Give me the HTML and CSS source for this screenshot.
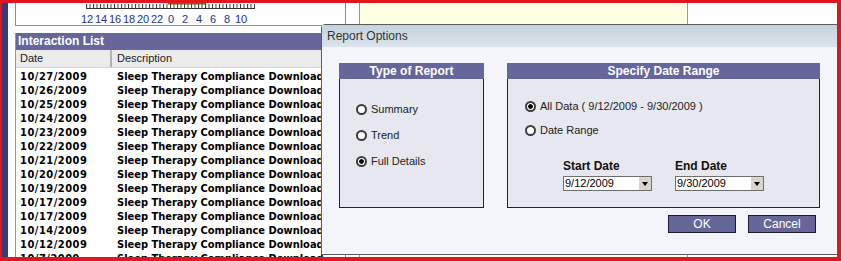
FILE: index.html
```html
<!DOCTYPE html>
<html lang="en">
<head>
    <meta charset="UTF-8">
    <title>Interaction List - Report Options</title>
    <link rel="stylesheet" href="styles.css">
</head>
<body>
    <div class="app">
        <div class="stripe"></div>

        <div class="left-col">
            <div class="chart">
                <svg width="329" height="22" viewBox="0 0 329 22">
                    <defs>
                        <pattern id="tick" x="70" y="0" width="3.5" height="5" patternUnits="userSpaceOnUse">
                            <rect width="1" height="5" fill="#333"/>
                        </pattern>
                    </defs>
                    <rect x="152" y="0" width="38" height="1" fill="#6f6a2a"/>
                    <rect x="152" y="1" width="38" height="1" fill="#9cc46a"/>
                    <rect x="70" y="1" width="169" height="4" fill="url(#tick)"/>
                    <path d="M70 5.5H239" stroke="#333"/>
                    <g class="hours">
                        <text x="71" y="20">12</text>
                        <text x="85" y="20">14</text>
                        <text x="99" y="20">16</text>
                        <text x="113" y="20">18</text>
                        <text x="127" y="20">20</text>
                        <text x="141" y="20">22</text>
                        <text x="155" y="20">0</text>
                        <text x="169" y="20">2</text>
                        <text x="183" y="20">4</text>
                        <text x="197" y="20">6</text>
                        <text x="211" y="20">8</text>
                        <text x="225" y="20">10</text>
                    </g>
                </svg>
            </div>

            <div class="list">
                <div class="list-title">Interaction List</div>
                <div class="list-head">
                    <div class="head-date">Date</div>
                    <div class="head-desc">Description</div>
                </div>
                <div class="rows">
                    <div class="row"><div class="cell-date">10/27/2009</div><div class="cell-desc">Sleep Therapy Compliance Download</div></div>
                    <div class="row"><div class="cell-date">10/26/2009</div><div class="cell-desc">Sleep Therapy Compliance Download</div></div>
                    <div class="row"><div class="cell-date">10/25/2009</div><div class="cell-desc">Sleep Therapy Compliance Download</div></div>
                    <div class="row"><div class="cell-date">10/24/2009</div><div class="cell-desc">Sleep Therapy Compliance Download</div></div>
                    <div class="row"><div class="cell-date">10/23/2009</div><div class="cell-desc">Sleep Therapy Compliance Download</div></div>
                    <div class="row"><div class="cell-date">10/22/2009</div><div class="cell-desc">Sleep Therapy Compliance Download</div></div>
                    <div class="row"><div class="cell-date">10/21/2009</div><div class="cell-desc">Sleep Therapy Compliance Download</div></div>
                    <div class="row"><div class="cell-date">10/20/2009</div><div class="cell-desc">Sleep Therapy Compliance Download</div></div>
                    <div class="row"><div class="cell-date">10/19/2009</div><div class="cell-desc">Sleep Therapy Compliance Download</div></div>
                    <div class="row"><div class="cell-date">10/17/2009</div><div class="cell-desc">Sleep Therapy Compliance Download</div></div>
                    <div class="row"><div class="cell-date">10/17/2009</div><div class="cell-desc">Sleep Therapy Compliance Download</div></div>
                    <div class="row"><div class="cell-date">10/14/2009</div><div class="cell-desc">Sleep Therapy Compliance Download</div></div>
                    <div class="row"><div class="cell-date">10/12/2009</div><div class="cell-desc">Sleep Therapy Compliance Download</div></div>
                    <div class="row"><div class="cell-date">10/7/2009</div><div class="cell-desc">Sleep Therapy Compliance Download</div></div>
                </div>
            </div>
        </div>

        <div class="note-col"></div>

        <!-- Report Options dialog -->
        <div class="dialog">
            <div class="dialog-title">Report Options</div>
            <div class="dialog-body">
                <div class="groups">
                    <div class="group group-type">
                        <div class="group-title">Type of Report</div>
                        <div class="group-body">
                            <label class="option"><input class="radio" type="radio" name="type">Summary</label>
                            <label class="option"><input class="radio" type="radio" name="type">Trend</label>
                            <label class="option"><input class="radio" type="radio" name="type" checked>Full Details</label>
                        </div>
                    </div>

                    <div class="group group-range">
                        <div class="group-title">Specify Date Range</div>
                        <div class="group-body">
                            <label class="option option-range"><input class="radio" type="radio" name="range" checked>All Data ( 9/12/2009 - 9/30/2009 )</label>
                            <label class="option option-range"><input class="radio" type="radio" name="range">Date Range</label>

                            <div class="date-fields">
                                <div class="date-field">
                                    <div class="date-label">Start Date</div>
                                    <div class="date-input"><span>9/12/2009</span><span class="drop"></span></div>
                                </div>
                                <div class="date-field">
                                    <div class="date-label">End Date</div>
                                    <div class="date-input"><span>9/30/2009</span><span class="drop"></span></div>
                                </div>
                            </div>
                        </div>
                    </div>
                </div>

                <div class="actions">
                    <button class="btn">OK</button>
                    <button class="btn">Cancel</button>
                </div>
            </div>
        </div>
    </div>
</body>
</html>
```

FILE: styles.css
```css
body {
    margin: 0;
    background-color: #e2141c; /* moldura vermelha */
    font-family: "Liberation Sans", Arial, sans-serif;
    font-size: 11px;
    color: #222;
}

.app {
    position: relative;
    margin: 3px 4px 4px 2px;
    height: 254px;
    display: flex;
    background-color: #fff;
    overflow: hidden;
}

.stripe {
    width: 6px;
    flex: none;
    background-color: #323c78;
}

.left-col {
    width: 330px;
    flex: none;
    padding-left: 7px;
    border-right: 1px solid #8c8c8c;
}

.chart {
    height: 22px;
    border-left: 1px solid #8c8c8c;
    border-bottom: 1px solid #8c8c8c;
}

.chart svg {
    display: block;
}

.hours text {
    font-family: "Liberation Sans", Arial, sans-serif;
    font-size: 11px;
    fill: #27318a;
    text-anchor: middle;
}

.list {
    margin-top: 7px;
    border-left: 1px solid #9a9a9a;
}

.list-title {
    height: 17px;
    line-height: 17px;
    padding-left: 2px;
    background-color: #66669a;
    color: #fff;
    font-size: 12px;
    font-weight: bold;
}

.list-head {
    display: flex;
    height: 17px;
    line-height: 17px;
    background-color: #ebebeb;
    border-bottom: 1px solid #d4d4d4;
    color: #222;
}

.head-date {
    width: 90px;
    padding-left: 4px;
    border-right: 2px solid #b4b4b4;
}

.head-desc {
    padding-left: 5px;
}

.rows {
    padding-top: 2px;
}

.row {
    display: flex;
    height: 14px;
    line-height: 14px;
    font-family: "DejaVu Sans Condensed", "DejaVu Sans", sans-serif;
    font-stretch: condensed;
    font-size: 11px;
    font-weight: bold;
    color: #000;
    white-space: nowrap;
}

.cell-date {
    width: 97px;
    flex: none;
    padding-left: 4px;
    letter-spacing: 0.5px;
}

.note-col {
    width: 327px;
    flex: none;
    margin-left: 13px;
    border-left: 1px solid #9a9a9a;
    border-right: 1px solid #9a9a9a;
    background-color: #ffffe3; /* amarelo claro */
}

/* dialog */
.dialog {
    position: absolute;
    left: 319px;
    top: 21px;
    width: 540px;
    height: 229px;
    border: 1px solid #5c5c5c;
    border-radius: 4px 4px 0 0;
    background-color: #f4f5fb;
}

.dialog-title {
    height: 22px;
    line-height: 22px;
    padding-left: 5px;
    font-size: 12px;
    color: #333;
    background: linear-gradient(#c5d2de, #dbe4ec);
}

.dialog-body {
    padding: 16px 0 0 17px;
}

.groups {
    display: flex;
    gap: 23px;
}

.group-type {
    width: 145px;
}

.group-range {
    width: 313px;
}

.group-title {
    height: 16px;
    line-height: 16px;
    text-align: center;
    background-color: #66669a;
    color: #fff;
    font-size: 12px;
    font-weight: bold;
}

.group-body {
    box-sizing: border-box;
    height: 129px;
    border: 1px solid #222;
    border-top: none;
    background-color: #e6e7ef;
}

.group-type .group-body {
    padding: 17px 0 0 16px;
}

.group-range .group-body {
    padding: 15px 0 0 17px;
}

.option {
    display: flex;
    align-items: center;
    height: 26px;
    color: #222;
}

.option-range {
    height: 24px;
}

.radio {
    -webkit-appearance: none;
    appearance: none;
    flex: none;
    width: 11px;
    height: 11px;
    margin: 0 4px 0 0;
    border: 2px solid #3c3c3c;
    border-radius: 50%;
    background-color: #fff;
}

.radio:checked {
    background: radial-gradient(circle, #000 0 2px, #fff 2.6px);
}

.date-fields {
    display: flex;
    margin: 17px 0 0 38px;
}

.date-field {
    width: 112px;
}

.date-label {
    height: 14px;
    line-height: 14px;
    font-size: 12px;
    font-weight: bold;
    color: #111;
}

.date-input {
    box-sizing: border-box;
    display: flex;
    width: 89px;
    height: 15px;
    margin-top: 3px;
    border: 1px solid #6f6f6f;
    background-color: #fff;
    line-height: 13px;
    color: #000;
}

.date-input span {
    padding-left: 1px;
}

.date-input .drop {
    width: 12px;
    margin-left: auto;
    padding: 0;
    display: flex;
    align-items: center;
    justify-content: center;
    background-color: #d9d5cd;
    border-left: 1px solid #fff;
}

.drop::after {
    content: "";
    border-left: 3px solid transparent;
    border-right: 3px solid transparent;
    border-top: 4px solid #000;
}

.actions {
    display: flex;
    justify-content: flex-end;
    gap: 12px;
    width: 481px;
    box-sizing: border-box;
    padding-right: 4px;
    margin-top: 7px;
}

.btn {
    width: 68px;
    height: 18px;
    padding: 0;
    border: 1px solid #1c1c30;
    background-color: #66669a;
    color: #fff;
    font-family: "Liberation Sans", Arial, sans-serif;
    font-size: 12px;
    line-height: 16px;
}
```
